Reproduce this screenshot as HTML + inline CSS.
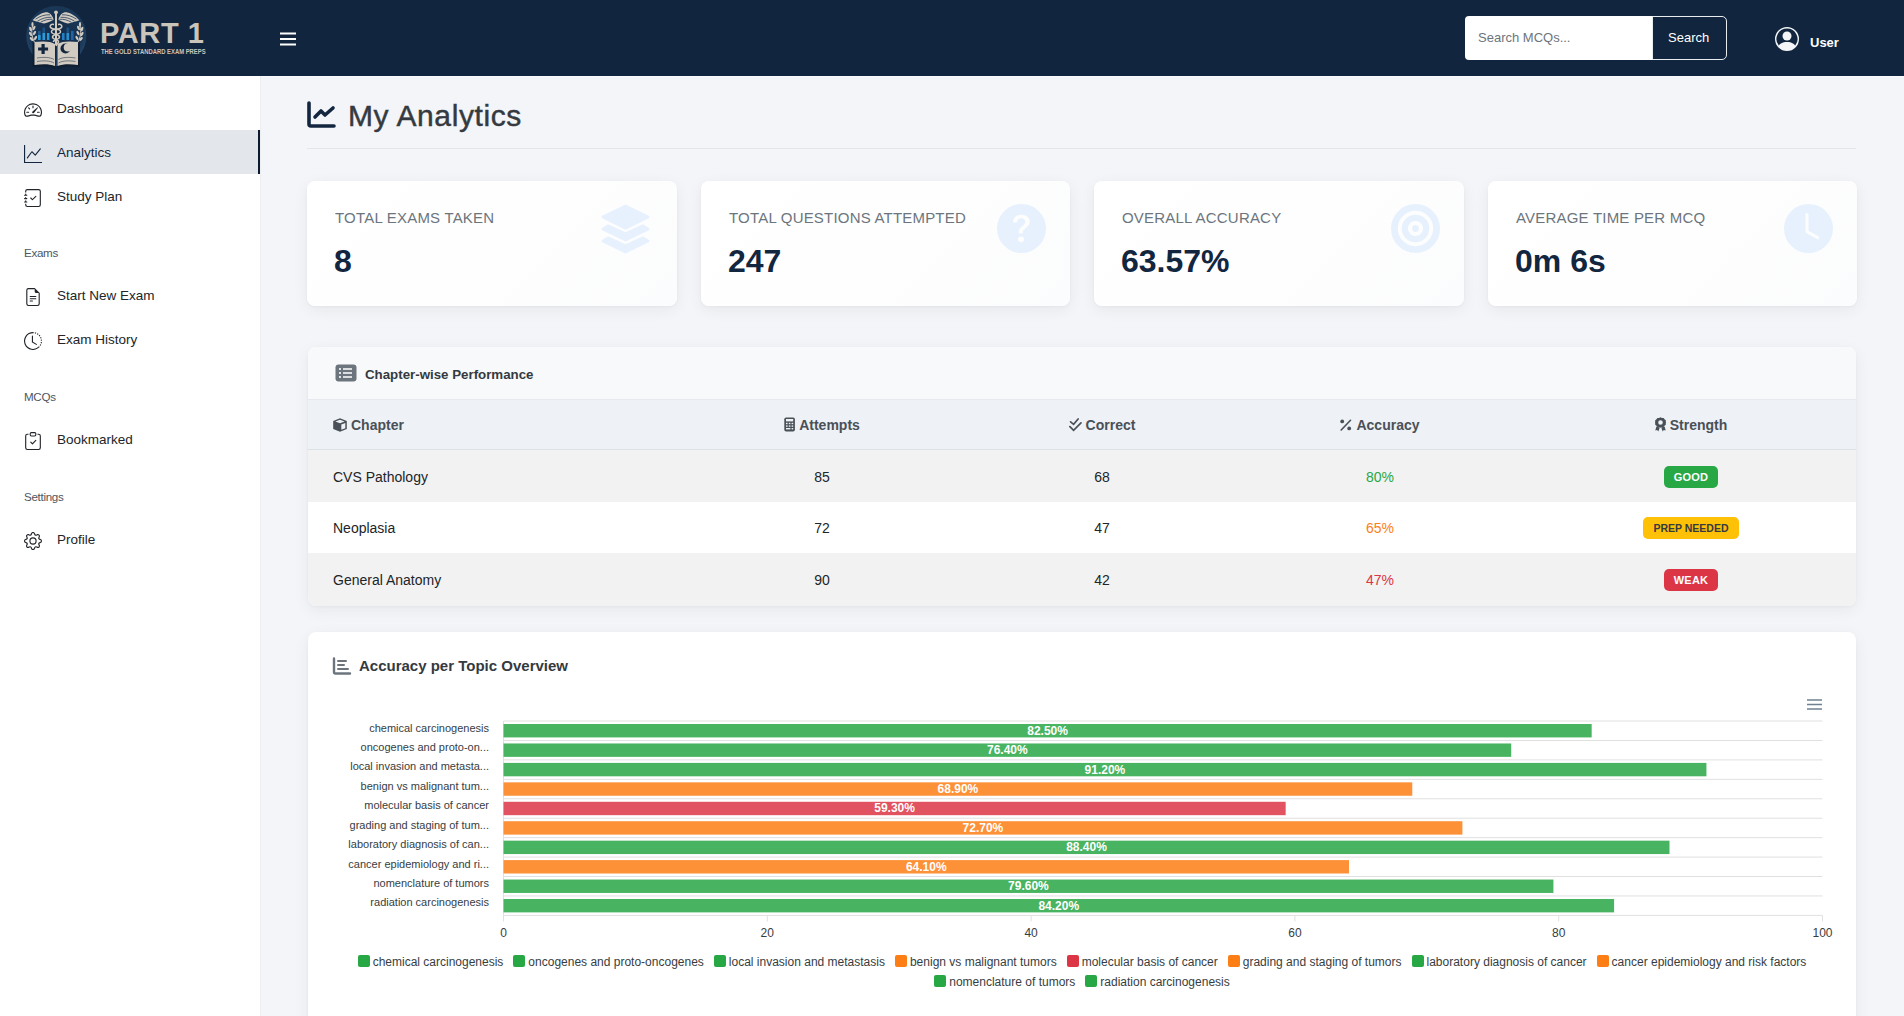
<!DOCTYPE html>
<html><head><meta charset="utf-8">
<style>
*{box-sizing:border-box;margin:0;padding:0}
html,body{width:1904px;height:1016px;overflow:hidden}
body{font-family:"Liberation Sans",sans-serif;background:#f4f5f8;color:#212529;position:relative}
.abs{position:absolute}
#nav{position:absolute;left:0;top:0;width:1904px;height:76px;background:#11263e}
#side{position:absolute;left:0;top:76px;width:260px;height:940px;background:#fff}
.si{position:absolute;left:0;width:260px;height:44px}
.si .ic{position:absolute;left:24px;top:14px;width:18px;height:18px}
.si .tx{position:absolute;left:57px;top:0;line-height:44px;font-size:13.5px;color:#212529}
.si.act{background:#e3e6ea;border-right:2px solid #0d1b2e}
.si.act .tx{color:#12263f;top:1px}.si.act .ic{top:15px}
.sh{position:absolute;left:24px;font-size:11.6px;color:#4d5560;letter-spacing:-.3px}
.card{position:absolute;background:#fff;border-radius:8px;box-shadow:0 1px 3px rgba(20,30,60,.035),0 4px 16px rgba(20,30,60,.06)}
.stat{top:181px;width:370px;height:125px;background:linear-gradient(135deg,#ffffff 0%,#fefefe 50%,#fbfcfd 100%)}
.stat .lb{position:absolute;left:28px;top:28px;font-size:15px;color:#6c757d;letter-spacing:.2px;white-space:nowrap}
.stat .vl{position:absolute;left:27px;top:62px;font-size:32px;font-weight:bold;color:#12263f;white-space:nowrap}
.stat svg{position:absolute;top:23px}

.tcard{left:308px;top:347px;width:1548px;height:259px;overflow:hidden}
.tcard .hd{position:absolute;left:0;top:0;width:1548px;height:53px;background:#f8f9fa;border-bottom:1px solid #e6e9ee}
.tcard .th{position:absolute;left:0;top:53px;width:1548px;height:50px;padding-top:1px;background:#eef1f5;border-bottom:1px solid #dce1e6}
.cell{position:absolute;top:0;height:100%;display:flex;align-items:center;justify-content:center;white-space:nowrap}
.th .cell{font-size:14px;font-weight:bold;color:#495057}
.tr{position:absolute;left:0;width:1548px}
.tr .cell{font-size:14px;color:#212529;padding-top:1px}
.c1{left:0;width:366px;justify-content:flex-start;padding-left:25px}
.c2{left:366px;width:296px}.c3{left:662px;width:264px}.c4{left:926px;width:292px}.c5{left:1218px;width:330px}
.badge{display:inline-block;font-size:11px;font-weight:bold;color:#fff;line-height:22px;height:22px;padding:0 10px;border-radius:5px;letter-spacing:.2px}


.ccard{left:308px;top:632px;width:1548px;height:420px}
.lg{display:inline-flex;align-items:center;font-size:12px;color:#373d3f;margin:0 5px;height:18.7px;white-space:nowrap}
.lg i{display:inline-block;width:12px;height:12px;border-radius:2px;margin-right:3px;position:relative;top:-1px}
#legend{position:absolute;left:308px;top:953px;width:1548px;text-align:center;line-height:18.7px}
</style></head>
<body>
<div id="nav">
  <!-- logo -->
  <svg class="abs" style="left:0;top:0" width="100" height="76" viewBox="0 0 100 76">
    <defs><radialGradient id="lg1" cx="50%" cy="45%" r="55%"><stop offset="0" stop-color="#142b47"/><stop offset="0.8" stop-color="#1a3756"/><stop offset="1" stop-color="#26486b"/></radialGradient></defs>
    <circle cx="56.3" cy="36" r="30" fill="url(#lg1)"/>
    <!-- wings -->
    <path d="M53.5 19 C52 14.5 49 11.8 45.5 12.2 C40.5 13 36 16.5 32.6 20.2 C36.5 21.3 40.5 22.8 44.2 23.6 C48 22.6 51.5 21 53.5 19.8Z" fill="#d2cbc2"/>
    <path d="M58.5 19 C60 14.5 63 11.8 66.5 12.2 C71.5 13 76 16.5 79.4 20.2 C75.5 21.3 71.5 22.8 67.8 23.6 C64 22.6 60.5 21 58.5 19.8Z" fill="#d2cbc2"/>
    <path d="M35.5 19.2 C40 16 45 14.5 50 14.8 M37.5 21.2 C42 18.3 46.5 17 51.5 17.3 M40.5 22.3 C44.5 20 48 19 52.5 19.3 M76.5 19.2 C72 16 67 14.5 62 14.8 M74.5 21.2 C70 18.3 65.5 17 60.5 17.3 M71.5 22.3 C67.5 20 64 19 59.5 19.3" stroke="#1a3553" stroke-width="0.75" fill="none"/>
    <!-- staff -->
    <rect x="55" y="12" width="2" height="34" fill="#d2cbc2"/>
    <circle cx="56" cy="12.3" r="1.9" fill="#d2cbc2"/>
    <path d="M54 24.5 C50.5 23.5 48.5 27 52 28.5 C55 30 61 28.5 60.5 32 C60 35 52.5 33.5 52.5 37 C52.5 40 59 39 58.5 42 C58 44 56 44.5 56 46" stroke="#d2cbc2" stroke-width="1.5" fill="none"/>
    <path d="M58 24.5 C61.5 23.5 63.5 27 60 28.5 C57 30 51 28.5 51.5 32 C52 35 59.5 33.5 59.5 37 C59.5 40 53 39 53.5 42" stroke="#d2cbc2" stroke-width="1.5" fill="none"/>
    <!-- wheat -->
    <path d="M32.5 26 C31 32 32 38 35 43" stroke="#d2cbc2" stroke-width="1" fill="none"/>
    <path d="M80 26 C81.5 32 80.5 38 77.5 43" stroke="#d2cbc2" stroke-width="1" fill="none"/>
    <g fill="#d2cbc2">
      <ellipse cx="30.5" cy="29" rx="1.2" ry="2.4" transform="rotate(-20 30.5 29)"/><ellipse cx="34" cy="28" rx="1.2" ry="2.4" transform="rotate(25 34 28)"/>
      <ellipse cx="30.5" cy="34" rx="1.2" ry="2.4" transform="rotate(-30 30.5 34)"/><ellipse cx="34.5" cy="33" rx="1.2" ry="2.4" transform="rotate(30 34.5 33)"/>
      <ellipse cx="31.5" cy="39" rx="1.2" ry="2.4" transform="rotate(-40 31.5 39)"/><ellipse cx="35.5" cy="38" rx="1.2" ry="2.4" transform="rotate(30 35.5 38)"/>
      <ellipse cx="32.5" cy="24.5" rx="1.1" ry="2.4"/><ellipse cx="80" cy="24.5" rx="1.1" ry="2.4"/>
      <ellipse cx="82" cy="29" rx="1.2" ry="2.4" transform="rotate(20 82 29)"/><ellipse cx="78.5" cy="28" rx="1.2" ry="2.4" transform="rotate(-25 78.5 28)"/>
      <ellipse cx="82" cy="34" rx="1.2" ry="2.4" transform="rotate(30 82 34)"/><ellipse cx="78" cy="33" rx="1.2" ry="2.4" transform="rotate(-30 78 33)"/>
      <ellipse cx="81" cy="39" rx="1.2" ry="2.4" transform="rotate(40 81 39)"/><ellipse cx="77" cy="38" rx="1.2" ry="2.4" transform="rotate(-30 77 38)"/>
    </g>
    <!-- bars -->
    <g>
      <rect x="38" y="31" width="2.6" height="9" fill="#1d5a92"/><rect x="38" y="35" width="2.6" height="5" fill="#2a9ad8"/>
      <rect x="42.5" y="27.5" width="2.6" height="12.5" fill="#1d4f80"/><rect x="42.5" y="33" width="2.6" height="7" fill="#2a9ad8"/>
      <rect x="47" y="33" width="2.4" height="7" fill="#2a9ad8"/>
      <rect x="62" y="33" width="2.6" height="7" fill="#2380c4"/>
      <rect x="66.5" y="27.5" width="2.6" height="12.5" fill="#1d4f80"/><rect x="66.5" y="33" width="2.6" height="7" fill="#2a8fd0"/>
      <rect x="71" y="31" width="2.6" height="9" fill="#1d65a8"/>
    </g>
    <!-- book -->
    <path d="M32.5 42.5 C40 41.5 50 41.5 55.5 45 L55.5 69 C50 66 40 66 32.5 67Z" fill="#0f1e31"/>
    <path d="M80 42.5 C72.5 41.5 62.5 41.5 57 45 L57 69 C62.5 66 72.5 66 80 67Z" fill="#0f1e31"/>
    <path d="M34.5 42 C42 41 51 41 55 44 L55 66 C50 64 42 64 34.5 65Z" fill="#d2cbc2"/>
    <path d="M78 42 C70.5 41 61.5 41 57.5 44 L57.5 66 C62.5 64 70.5 64 78 65Z" fill="#d2cbc2"/>
    <path d="M37 58 C43 57 50 57 54 59.5 M37 61.5 C43 60.5 50 60.5 54 63 M75.5 58 C69.5 57 62.5 57 58.5 59.5 M75.5 61.5 C69.5 60.5 62.5 60.5 58.5 63" stroke="#2a3a4c" stroke-width="0.6" fill="none"/>
    <path d="M41.5 44 h3.2 v3.4 h3.4 v3.2 h-3.4 v3.4 h-3.2 v-3.4 h-3.4 v-3.2 h3.4z" fill="#13263e"/>
    <circle cx="65.5" cy="48.5" r="5" fill="#13263e"/><circle cx="67.8" cy="47.5" r="4.1" fill="#d2cbc2"/>
  </svg>
  <div class="abs" style="left:100px;top:17px;font-size:29px;font-weight:bold;color:#cbc4bb;letter-spacing:0.6px;line-height:32px">PART 1</div>
  <div class="abs" style="left:101px;top:48px;font-size:6.6px;font-weight:bold;color:#cbc4bb;line-height:8px;transform:scaleX(0.89);transform-origin:0 0;white-space:nowrap">THE GOLD STANDARD EXAM PREPS</div>
  <!-- hamburger -->
  <svg class="abs" style="left:279px;top:31px" width="18" height="16" viewBox="0 0 18 16"><path d="M1 2.5h16M1 8h16M1 13.5h16" stroke="#fff" stroke-width="2"/></svg>
  <!-- search -->
  <div class="abs" style="left:1465px;top:16px;width:188px;height:44px;background:#fff;border-radius:4px 0 0 4px"></div>
  <div class="abs" style="left:1478px;top:16px;line-height:44px;font-size:13px;color:#6c757d">Search MCQs...</div>
  <div class="abs" style="left:1652px;top:16px;width:75px;height:44px;border:1px solid #e9ecef;border-radius:0 5px 5px 0"></div>
  <div class="abs" style="left:1668px;top:16px;line-height:44px;font-size:13px;color:#fff">Search</div>
  <!-- user -->
  <svg class="abs" style="left:1775px;top:27px" width="24" height="24" viewBox="0 0 16 16"><path fill="#f4f5f8" d="M11 6a3 3 0 1 1-6 0 3 3 0 0 1 6 0z"/><path fill="#f4f5f8" fill-rule="evenodd" d="M0 8a8 8 0 1 1 16 0A8 8 0 0 1 0 8zm8-7a7 7 0 0 0-5.468 11.37C3.242 11.226 4.805 10 8 10s4.757 1.225 5.468 2.37A7 7 0 0 0 8 1z"/></svg>
  <div class="abs" style="left:1810px;top:34px;font-size:13px;font-weight:bold;color:#fff;line-height:17px">User</div>
</div>

<div class="abs" style="left:260px;top:76px;width:1px;height:940px;background:#eceef1"></div>
<div class="abs" style="left:261px;top:76px;width:1643px;height:1px;background:#f9fafb"></div>
<div id="side">
  <div class="si" style="top:11px"><svg class="ic" viewBox="0 0 16 16"><path fill="#212529" d="M8 4a.5.5 0 0 1 .5.5V6a.5.5 0 0 1-1 0V4.5A.5.5 0 0 1 8 4zM3.732 5.732a.5.5 0 0 1 .707 0l.915.914a.5.5 0 1 1-.708.708l-.914-.915a.5.5 0 0 1 0-.707zM2 10a.5.5 0 0 1 .5-.5h1.586a.5.5 0 0 1 0 1H2.5A.5.5 0 0 1 2 10zm9.5 0a.5.5 0 0 1 .5-.5h1.5a.5.5 0 0 1 0 1H12a.5.5 0 0 1-.5-.5zm.754-4.246a.389.389 0 0 0-.527-.02L7.547 9.31a.91.91 0 1 0 1.302 1.258l3.434-4.297a.389.389 0 0 0-.029-.518z"/><path fill="#212529" fill-rule="evenodd" d="M0 10a8 8 0 1 1 15.547 2.661c-.442 1.253-1.845 1.602-2.932 1.25C11.309 13.488 9.475 13 8 13c-1.474 0-3.31.488-4.615.911-1.087.352-2.49.003-2.932-1.25A7.988 7.988 0 0 1 0 10zm8-7a7 7 0 0 0-6.603 9.329c.203.575.923.876 1.68.63C4.397 12.533 6.358 12 8 12s3.604.532 4.923.96c.757.245 1.477-.056 1.68-.631A7 7 0 0 0 8 3z"/></svg><div class="tx">Dashboard</div></div>
  <div class="si act" style="top:54px"><svg class="ic" viewBox="0 0 16 16"><path fill="#12263f" fill-rule="evenodd" d="M0 0h1v15h15v1H0V0Zm14.817 3.113a.5.5 0 0 1 .07.704l-4.5 5.5a.5.5 0 0 1-.74.037L7.06 6.767l-3.656 5.027a.5.5 0 0 1-.808-.588l4-5.5a.5.5 0 0 1 .758-.06l2.609 2.61 4.15-5.073a.5.5 0 0 1 .704-.07Z"/></svg><div class="tx">Analytics</div></div>
  <div class="si" style="top:99px"><svg class="ic" viewBox="0 0 16 16"><path fill="#212529" fill-rule="evenodd" d="M10.854 6.146a.5.5 0 0 1 0 .708l-3 3a.5.5 0 0 1-.708 0l-1.5-1.5a.5.5 0 1 1 .708-.708L7.5 8.793l2.646-2.647a.5.5 0 0 1 .708 0z"/><path fill="#212529" d="M3 0h10a2 2 0 0 1 2 2v12a2 2 0 0 1-2 2H3a2 2 0 0 1-2-2v-1h1v1a1 1 0 0 0 1 1h10a1 1 0 0 0 1-1V2a1 1 0 0 0-1-1H3a1 1 0 0 0-1 1v1H1V2a2 2 0 0 1 2-2z"/><path fill="#212529" d="M1 5v-.5a.5.5 0 0 1 1 0V5h.5a.5.5 0 0 1 0 1h-2a.5.5 0 0 1 0-1H1zm0 3v-.5a.5.5 0 0 1 1 0V8h.5a.5.5 0 0 1 0 1h-2a.5.5 0 0 1 0-1H1zm0 3v-.5a.5.5 0 0 1 1 0v.5h.5a.5.5 0 0 1 0 1h-2a.5.5 0 0 1 0-1H1z"/></svg><div class="tx">Study Plan</div></div>
  <div class="sh" style="top:170px">Exams</div>
  <div class="si" style="top:198px"><svg class="ic" viewBox="0 0 16 16"><path fill="#212529" d="M5.5 7a.5.5 0 0 0 0 1h5a.5.5 0 0 0 0-1h-5zM5 9.5a.5.5 0 0 1 .5-.5h5a.5.5 0 0 1 0 1h-5a.5.5 0 0 1-.5-.5zm0 2a.5.5 0 0 1 .5-.5h2a.5.5 0 0 1 0 1h-2a.5.5 0 0 1-.5-.5z"/><path fill="#212529" d="M9.5 0H4a2 2 0 0 0-2 2v12a2 2 0 0 0 2 2h8a2 2 0 0 0 2-2V4.5L9.5 0zm0 1v2A1.5 1.5 0 0 0 11 4.5h2V14a1 1 0 0 1-1 1H4a1 1 0 0 1-1-1V2a1 1 0 0 1 1-1h5.5z"/></svg><div class="tx">Start New Exam</div></div>
  <div class="si" style="top:242px"><svg class="ic" viewBox="0 0 16 16"><path fill="#212529" d="M8.515 1.019A7 7 0 0 0 8 1V0a8 8 0 0 1 .589.022l-.074.997zm2.004.45a7.003 7.003 0 0 0-.985-.299l.219-.976c.383.086.76.2 1.126.342l-.36.933zm1.37.71a7.01 7.01 0 0 0-.439-.27l.493-.87a8.025 8.025 0 0 1 .979.654l-.615.789a6.996 6.996 0 0 0-.418-.302zm1.834 1.79a6.99 6.99 0 0 0-.653-.796l.724-.69c.27.285.52.59.747.91l-.818.576zm.744 1.352a7.08 7.08 0 0 0-.214-.468l.893-.45a7.976 7.976 0 0 1 .45 1.088l-.95.313a7.023 7.023 0 0 0-.179-.483zm.53 2.507a6.991 6.991 0 0 0-.1-1.025l.985-.17c.067.386.106.778.116 1.17l-1 .025zm-.131 1.538c.033-.17.06-.339.081-.51l.993.123a7.957 7.957 0 0 1-.23 1.155l-.964-.267c.046-.165.086-.332.12-.501zm-.952 2.379c.184-.29.346-.594.486-.908l.914.405c-.16.36-.345.706-.555 1.038l-.845-.535zm-.964 1.205c.122-.122.239-.248.35-.378l.758.653a8.073 8.073 0 0 1-.401.432l-.707-.707z"/><path fill="#212529" d="M8 1a7 7 0 1 0 4.95 11.95l.707.707A8.001 8.001 0 1 1 8 0v1z"/><path fill="#212529" d="M7.5 3a.5.5 0 0 1 .5.5v5.21l3.248 1.856a.5.5 0 0 1-.496.868l-3.5-2A.5.5 0 0 1 7 9V3.5a.5.5 0 0 1 .5-.5z"/></svg><div class="tx">Exam History</div></div>
  <div class="sh" style="top:314px">MCQs</div>
  <div class="si" style="top:342px"><svg class="ic" viewBox="0 0 16 16"><path fill="#212529" fill-rule="evenodd" d="M10.854 7.146a.5.5 0 0 1 0 .708l-3 3a.5.5 0 0 1-.708 0l-1.5-1.5a.5.5 0 1 1 .708-.708L7.5 9.793l2.646-2.647a.5.5 0 0 1 .708 0z"/><path fill="#212529" d="M4 1.5H3a2 2 0 0 0-2 2V14a2 2 0 0 0 2 2h10a2 2 0 0 0 2-2V3.5a2 2 0 0 0-2-2h-1v1h1a1 1 0 0 1 1 1V14a1 1 0 0 1-1 1H3a1 1 0 0 1-1-1V3.5a1 1 0 0 1 1-1h1v-1z"/><path fill="#212529" d="M9.5 1a.5.5 0 0 1 .5.5v1a.5.5 0 0 1-.5.5h-3a.5.5 0 0 1-.5-.5v-1a.5.5 0 0 1 .5-.5h3zm-3-1A1.5 1.5 0 0 0 5 1.5v1A1.5 1.5 0 0 0 6.5 4h3A1.5 1.5 0 0 0 11 2.5v-1A1.5 1.5 0 0 0 9.5 0h-3z"/></svg><div class="tx">Bookmarked</div></div>
  <div class="sh" style="top:414px">Settings</div>
  <div class="si" style="top:442px"><svg class="ic" viewBox="0 0 16 16"><path fill="#212529" d="M8 4.754a3.246 3.246 0 1 0 0 6.492 3.246 3.246 0 0 0 0-6.492zM5.754 8a2.246 2.246 0 1 1 4.492 0 2.246 2.246 0 0 1-4.492 0z"/><path fill="#212529" d="M9.796 1.343c-.527-1.79-3.065-1.79-3.592 0l-.094.319a.873.873 0 0 1-1.255.52l-.292-.16c-1.64-.892-3.433.902-2.54 2.541l.159.292a.873.873 0 0 1-.52 1.255l-.319.094c-1.79.527-1.79 3.065 0 3.592l.319.094a.873.873 0 0 1 .52 1.255l-.16.292c-.892 1.64.901 3.434 2.541 2.54l.292-.159a.873.873 0 0 1 1.255.52l.094.319c.527 1.79 3.065 1.79 3.592 0l.094-.319a.873.873 0 0 1 1.255-.52l.292.16c1.64.893 3.434-.902 2.54-2.541l-.159-.292a.873.873 0 0 1 .52-1.255l.319-.094c1.79-.527 1.79-3.065 0-3.592l-.319-.094a.873.873 0 0 1-.52-1.255l.16-.292c.893-1.64-.902-3.433-2.541-2.54l-.292.159a.873.873 0 0 1-1.255-.52l-.094-.319zm-2.633.283c.246-.835 1.428-.835 1.674 0l.094.319a1.873 1.873 0 0 0 2.693 1.115l.291-.16c.764-.415 1.6.42 1.184 1.185l-.159.292a1.873 1.873 0 0 0 1.116 2.692l.318.094c.835.246.835 1.428 0 1.674l-.319.094a1.873 1.873 0 0 0-1.115 2.693l.16.291c.415.764-.42 1.6-1.185 1.184l-.291-.159a1.873 1.873 0 0 0-2.693 1.116l-.094.318c-.246.835-1.428.835-1.674 0l-.094-.319a1.873 1.873 0 0 0-2.692-1.115l-.292.16c-.764.415-1.6-.42-1.184-1.185l.159-.291A1.873 1.873 0 0 0 1.945 8.93l-.319-.094c-.835-.246-.835-1.428 0-1.674l.319-.094A1.873 1.873 0 0 0 3.06 4.377l-.16-.292c-.415-.764.42-1.6 1.185-1.184l.292.159a1.873 1.873 0 0 0 2.692-1.115l.094-.319z"/></svg><div class="tx">Profile</div></div>
</div>

<!-- page title -->
<svg class="abs" style="left:306px;top:100px" width="31" height="28" viewBox="0 0 31 28"><path d="M3 3 V24 Q3 26 5 26 H28" stroke="#12263f" stroke-width="3.6" fill="none" stroke-linecap="round"/><path d="M9 17 L15 11 L19 15 L27 8" stroke="#12263f" stroke-width="3.6" fill="none" stroke-linecap="round" stroke-linejoin="round"/></svg>
<div class="abs" style="left:348px;top:98px;font-size:30px;color:#343a40;line-height:36px;letter-spacing:.6px;-webkit-text-stroke:.45px #343a40">My Analytics</div>
<div class="abs" style="left:307px;top:148px;width:1549px;height:1px;background:#e2e5ea"></div>


<!-- stat cards -->
<div class="card stat" style="left:307px"><div class="lb">TOTAL EXAMS TAKEN</div><div class="vl">8</div>
<svg style="left:294px;top:23px" width="49" height="50" viewBox="0 0 49 50"><g fill="#e7f1fd" stroke="#e7f1fd" stroke-width="2.6" stroke-linejoin="round"><path d="M1.8 13 L24.5 1.8 L47.2 13 L24.5 24.4Z"/><path d="M1.8 25 L7 21.8 L24.5 29.8 L42 21.8 L47.2 25 L24.5 36.2Z"/><path d="M1.8 37 L7 33.8 L24.5 41.8 L42 33.8 L47.2 37 L24.5 48.2Z"/></g></svg></div>
<div class="card stat" style="left:701px;width:369px"><div class="lb">TOTAL QUESTIONS ATTEMPTED</div><div class="vl">247</div>
<svg style="left:296px;top:23px" width="49" height="49" viewBox="0 0 16 16"><path fill="#e7f1fd" d="M16 8A8 8 0 1 1 0 8a8 8 0 0 1 16 0zM5.496 6.033h.825c.138 0 .248-.113.266-.25.09-.656.54-1.134 1.342-1.134.686 0 1.314.343 1.314 1.168 0 .635-.374.927-.965 1.371-.673.489-1.206 1.06-1.168 1.987l.003.217a.25.25 0 0 0 .25.246h.811a.25.25 0 0 0 .25-.25v-.105c0-.718.273-.927 1.01-1.486.609-.463 1.244-.977 1.244-2.056 0-1.511-1.276-2.241-2.673-2.241-1.267 0-2.655.59-2.75 2.286a.237.237 0 0 0 .241.247zm2.325 6.443c.61 0 1.029-.394 1.029-.927 0-.552-.42-.94-1.029-.94-.584 0-1.009.388-1.009.94 0 .533.425.927 1.01.927z"/></svg></div>
<div class="card stat" style="left:1094px"><div class="lb">OVERALL ACCURACY</div><div class="vl">63.57%</div>
<svg style="left:297px;top:23px" width="49" height="49" viewBox="0 0 49 49"><circle cx="24.5" cy="24.5" r="21.1" fill="none" stroke="#e7f1fd" stroke-width="6.8"/><circle cx="24.5" cy="24.5" r="10.7" fill="none" stroke="#e7f1fd" stroke-width="6.2"/><circle cx="24.5" cy="24.5" r="3.4" fill="#e7f1fd"/></svg></div>
<div class="card stat" style="left:1488px;width:369px"><div class="lb">AVERAGE TIME PER MCQ</div><div class="vl">0m 6s</div>
<svg style="left:296px;top:23px" width="49" height="49" viewBox="0 0 16 16"><path fill="#e7f1fd" d="M16 8A8 8 0 1 1 0 8a8 8 0 0 1 16 0zM8 3.5a.5.5 0 0 0-1 0V9a.5.5 0 0 0 .252.434l3.5 2a.5.5 0 0 0 .496-.868L8 8.71V3.5z"/></svg></div>

<!-- chapter table -->
<div class="card tcard">
  <div class="hd">
    <svg class="abs" style="left:27px;top:17px" width="22" height="18" viewBox="0 0 22 18"><rect x="0.5" y="0.5" width="21" height="17" rx="3" fill="#6c757d"/><circle cx="5" cy="5" r="1.1" fill="#fff"/><circle cx="5" cy="9" r="1.1" fill="#fff"/><circle cx="5" cy="13" r="1.1" fill="#fff"/><path d="M8 5h9M8 9h9M8 13h9" stroke="#fff" stroke-width="1.3"/></svg>
    <div class="abs" style="left:57px;top:1px;line-height:54px;font-size:13.3px;font-weight:bold;color:#343a40">Chapter-wise Performance</div>
  </div>
  <div class="th">
    <div class="cell c1"><svg width="14" height="14" viewBox="0 0 14 14" style="margin-right:4px"><path d="M7 0.2 L13.8 2.9 L13.8 11.1 L7 13.8 L0.2 11.1 L0.2 2.9Z" fill="#495057"/><path d="M7 1.7 L11.6 3.5 L7 5.3 L2.4 3.5Z" fill="#eef1f5"/><path d="M8.3 6.6 L12.3 5 L12.3 10.2 L8.3 11.8Z" fill="#eef1f5"/></svg>Chapter</div>
    <div class="cell c2"><svg width="11" height="15" viewBox="0 0 11 15" style="margin-right:4px"><rect x="0.3" y="0.4" width="10.6" height="14.2" rx="1.8" fill="#495057"/><rect x="2" y="2" width="7.2" height="2.4" fill="#eef1f5"/><g fill="#eef1f5"><rect x="2" y="5.8" width="1.6" height="1.4"/><rect x="4.8" y="5.8" width="1.6" height="1.4"/><rect x="7.6" y="5.8" width="1.6" height="1.4"/><rect x="2" y="8.4" width="1.6" height="1.4"/><rect x="4.8" y="8.4" width="1.6" height="1.4"/><rect x="7.6" y="8.4" width="1.6" height="1.4"/><rect x="2" y="11" width="4.4" height="1.4"/><rect x="7.6" y="11" width="1.6" height="1.4"/></g></svg>Attempts</div>
    <div class="cell c3"><svg width="13" height="14" viewBox="0 0 13 14" style="margin-right:4px"><path d="M1.6 3.8 L4.6 6.3 L9.1 1 M0.9 8.6 L4.6 12.4 L12 4.8" stroke="#495057" stroke-width="1.7" fill="none" stroke-linecap="round" stroke-linejoin="miter"/></svg>Correct</div>
    <div class="cell c4"><svg width="12" height="12" viewBox="0 0 12 12" style="margin-right:4px"><circle cx="2.2" cy="2.4" r="1.9" fill="#495057"/><circle cx="9.2" cy="9.4" r="1.9" fill="#495057"/><path d="M1.2 11 L10.5 1.3" stroke="#495057" stroke-width="1.6" stroke-linecap="round"/></svg>Accuracy</div>
    <div class="cell c5"><svg width="11" height="15" viewBox="0 0 11 15" style="margin-right:4px"><path fill="#495057" fill-rule="evenodd" d="M5.5 0.2 L7 0.9 L8.6 1 L9.5 2.3 L10.8 3.2 L10.8 4.8 L11 5.5 L10.8 6.2 L10.8 7.8 L9.5 8.7 L8.6 10 L7 10.1 L5.5 10.8 L4 10.1 L2.4 10 L1.5 8.7 L0.2 7.8 L0.2 6.2 L0 5.5 L0.2 4.8 L0.2 3.2 L1.5 2.3 L2.4 1 L4 0.9Z M5.5 3.2 A2.3 2.3 0 1 0 5.5 7.8 A2.3 2.3 0 1 0 5.5 3.2Z"/><path fill="#495057" d="M1.4 9.6 L0.3 13.4 L2.2 13 L3.3 14.5 L4.8 10.6Z M9.6 9.6 L10.7 13.4 L8.8 13 L7.7 14.5 L6.2 10.6Z"/></svg>Strength</div>
  </div>
  <div class="tr" style="top:103px;height:52px;background:#f2f2f2">
    <div class="cell c1">CVS Pathology</div><div class="cell c2">85</div><div class="cell c3">68</div><div class="cell c4" style="color:#28a745">80%</div><div class="cell c5"><span class="badge" style="background:#28a745">GOOD</span></div>
  </div>
  <div class="tr" style="top:155px;height:51px;background:#fff">
    <div class="cell c1">Neoplasia</div><div class="cell c2">72</div><div class="cell c3">47</div><div class="cell c4" style="color:#fd7e14">65%</div><div class="cell c5"><span class="badge" style="background:#ffc107;color:#343a40;font-size:10.5px;letter-spacing:0">PREP NEEDED</span></div>
  </div>
  <div class="tr" style="top:206px;height:53px;background:#f2f2f2">
    <div class="cell c1">General Anatomy</div><div class="cell c2">90</div><div class="cell c3">42</div><div class="cell c4" style="color:#dc3545">47%</div><div class="cell c5"><span class="badge" style="background:#dc3545">WEAK</span></div>
  </div>
</div>

<!-- chart card -->
<div class="card ccard">
  <svg class="abs" style="left:24px;top:25px" width="20" height="18" viewBox="0 0 20 18"><path d="M2 1.5 V15 Q2 16.5 3.5 16.5 H18" stroke="#6c757d" stroke-width="2.4" fill="none" stroke-linecap="round"/><path d="M6 4h8M6 8h6M6 12h10" stroke="#6c757d" stroke-width="2" stroke-linecap="round"/></svg>
  <div class="abs" style="left:51px;top:23px;line-height:22px;font-size:15px;font-weight:bold;color:#343a40">Accuracy per Topic Overview</div>
  <svg class="abs" style="left:1498px;top:66px" width="18" height="14" viewBox="0 0 18 14"><path d="M1 2h15M1 6.5h15M1 11h15" stroke="#6e8192" stroke-width="1.6"/></svg>
</div>
<svg class="abs" style="left:0;top:0" width="1904" height="1016" viewBox="0 0 1904 1016" font-family="Liberation Sans, sans-serif"><line x1="503.5" y1="721.00" x2="1822.5" y2="721.00" stroke="#e0e0e0" stroke-width="1"/><line x1="503.5" y1="740.44" x2="1822.5" y2="740.44" stroke="#e0e0e0" stroke-width="1"/><line x1="503.5" y1="759.88" x2="1822.5" y2="759.88" stroke="#e0e0e0" stroke-width="1"/><line x1="503.5" y1="779.32" x2="1822.5" y2="779.32" stroke="#e0e0e0" stroke-width="1"/><line x1="503.5" y1="798.76" x2="1822.5" y2="798.76" stroke="#e0e0e0" stroke-width="1"/><line x1="503.5" y1="818.20" x2="1822.5" y2="818.20" stroke="#e0e0e0" stroke-width="1"/><line x1="503.5" y1="837.64" x2="1822.5" y2="837.64" stroke="#e0e0e0" stroke-width="1"/><line x1="503.5" y1="857.08" x2="1822.5" y2="857.08" stroke="#e0e0e0" stroke-width="1"/><line x1="503.5" y1="876.52" x2="1822.5" y2="876.52" stroke="#e0e0e0" stroke-width="1"/><line x1="503.5" y1="895.96" x2="1822.5" y2="895.96" stroke="#e0e0e0" stroke-width="1"/><line x1="503.5" y1="915.40" x2="1822.5" y2="915.40" stroke="#e0e0e0" stroke-width="1"/><line x1="503.5" y1="721.0" x2="503.5" y2="915.4" stroke="#e0e0e0" stroke-width="1"/><rect x="503.5" y="724.02" width="1088.17" height="13.4" fill="#48b461"/><text x="1047.59" y="734.72" text-anchor="middle" font-size="12" font-weight="bold" fill="#fff">82.50%</text><text x="489" y="731.52" text-anchor="end" font-size="11" fill="#373d3f">chemical carcinogenesis</text><rect x="503.5" y="743.46" width="1007.72" height="13.4" fill="#48b461"/><text x="1007.36" y="754.16" text-anchor="middle" font-size="12" font-weight="bold" fill="#fff">76.40%</text><text x="489" y="750.96" text-anchor="end" font-size="11" fill="#373d3f">oncogenes and proto-on...</text><rect x="503.5" y="762.90" width="1202.93" height="13.4" fill="#48b461"/><text x="1104.96" y="773.60" text-anchor="middle" font-size="12" font-weight="bold" fill="#fff">91.20%</text><text x="489" y="770.40" text-anchor="end" font-size="11" fill="#373d3f">local invasion and metasta...</text><rect x="503.5" y="782.34" width="908.79" height="13.4" fill="#fd9137"/><text x="957.90" y="793.04" text-anchor="middle" font-size="12" font-weight="bold" fill="#fff">68.90%</text><text x="489" y="789.84" text-anchor="end" font-size="11" fill="#373d3f">benign vs malignant tum...</text><rect x="503.5" y="801.78" width="782.17" height="13.4" fill="#e15361"/><text x="894.58" y="812.48" text-anchor="middle" font-size="12" font-weight="bold" fill="#fff">59.30%</text><text x="489" y="809.28" text-anchor="end" font-size="11" fill="#373d3f">molecular basis of cancer</text><rect x="503.5" y="821.22" width="958.91" height="13.4" fill="#fd9137"/><text x="982.96" y="831.92" text-anchor="middle" font-size="12" font-weight="bold" fill="#fff">72.70%</text><text x="489" y="828.72" text-anchor="end" font-size="11" fill="#373d3f">grading and staging of tum...</text><rect x="503.5" y="840.66" width="1166.00" height="13.4" fill="#48b461"/><text x="1086.50" y="851.36" text-anchor="middle" font-size="12" font-weight="bold" fill="#fff">88.40%</text><text x="489" y="848.16" text-anchor="end" font-size="11" fill="#373d3f">laboratory diagnosis of can...</text><rect x="503.5" y="860.10" width="845.48" height="13.4" fill="#fd9137"/><text x="926.24" y="870.80" text-anchor="middle" font-size="12" font-weight="bold" fill="#fff">64.10%</text><text x="489" y="867.60" text-anchor="end" font-size="11" fill="#373d3f">cancer epidemiology and ri...</text><rect x="503.5" y="879.54" width="1049.92" height="13.4" fill="#48b461"/><text x="1028.46" y="890.24" text-anchor="middle" font-size="12" font-weight="bold" fill="#fff">79.60%</text><text x="489" y="887.04" text-anchor="end" font-size="11" fill="#373d3f">nomenclature of tumors</text><rect x="503.5" y="898.98" width="1110.60" height="13.4" fill="#48b461"/><text x="1058.80" y="909.68" text-anchor="middle" font-size="12" font-weight="bold" fill="#fff">84.20%</text><text x="489" y="906.48" text-anchor="end" font-size="11" fill="#373d3f">radiation carcinogenesis</text><line x1="503.50" y1="915.4" x2="503.50" y2="921.4" stroke="#e0e0e0" stroke-width="1"/><text x="503.50" y="937" text-anchor="middle" font-size="12" fill="#373d3f">0</text><line x1="767.30" y1="915.4" x2="767.30" y2="921.4" stroke="#e0e0e0" stroke-width="1"/><text x="767.30" y="937" text-anchor="middle" font-size="12" fill="#373d3f">20</text><line x1="1031.10" y1="915.4" x2="1031.10" y2="921.4" stroke="#e0e0e0" stroke-width="1"/><text x="1031.10" y="937" text-anchor="middle" font-size="12" fill="#373d3f">40</text><line x1="1294.90" y1="915.4" x2="1294.90" y2="921.4" stroke="#e0e0e0" stroke-width="1"/><text x="1294.90" y="937" text-anchor="middle" font-size="12" fill="#373d3f">60</text><line x1="1558.70" y1="915.4" x2="1558.70" y2="921.4" stroke="#e0e0e0" stroke-width="1"/><text x="1558.70" y="937" text-anchor="middle" font-size="12" fill="#373d3f">80</text><line x1="1822.50" y1="915.4" x2="1822.50" y2="921.4" stroke="#e0e0e0" stroke-width="1"/><text x="1822.50" y="937" text-anchor="middle" font-size="12" fill="#373d3f">100</text></svg>
<div id="legend"><span class="lg"><i style="background:#28a745"></i>chemical carcinogenesis</span><span class="lg"><i style="background:#28a745"></i>oncogenes and proto-oncogenes</span><span class="lg"><i style="background:#28a745"></i>local invasion and metastasis</span><span class="lg"><i style="background:#fd7e14"></i>benign vs malignant tumors</span><span class="lg"><i style="background:#dc3545"></i>molecular basis of cancer</span><span class="lg"><i style="background:#fd7e14"></i>grading and staging of tumors</span><span class="lg"><i style="background:#28a745"></i>laboratory diagnosis of cancer</span><span class="lg"><i style="background:#fd7e14"></i>cancer epidemiology and risk factors</span><span class="lg"><i style="background:#28a745"></i>nomenclature of tumors</span><span class="lg"><i style="background:#28a745"></i>radiation carcinogenesis</span></div>
</body></html>
